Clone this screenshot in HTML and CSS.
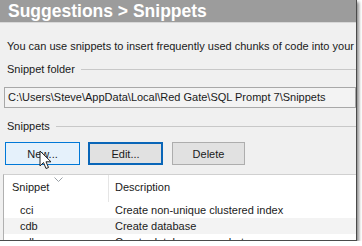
FILE: index.html
```html
<!DOCTYPE html>
<html>
<head>
<meta charset="utf-8">
<link rel="stylesheet" href="styles.css">
</head>
<body>
<div class="frame">
  <div class="title">Suggestions &gt; Snippets</div>
  <div class="content">
    <p class="intro">You can use snippets to insert frequently used chunks of code into your</p>
    <div class="group-label"><span>Snippet folder</span><i></i></div>
    <div class="path">C:\Users\Steve\AppData\Local\Red Gate\SQL Prompt 7\Snippets</div>
    <div class="group-label second"><span>Snippets</span><i></i></div>
    <div class="buttons">
      <button class="btn hover">New...</button>
      <button class="btn focus">Edit...</button>
      <button class="btn del">Delete</button>
    </div>
    <div class="list">
      <div class="list-head">
        <div class="col c1">Snippet<svg class="sort" width="9" height="5" viewBox="0 0 9 5"><path d="M0.5 0.5 L4.5 4.5 L8.5 0.5" fill="none" stroke="#9aa0a6" stroke-width="1"/></svg></div>
        <div class="col c2">Description</div>
      </div>
      <div class="row"><div class="col c1">cci</div><div class="col c2">Create non-unique clustered index</div></div>
      <div class="row alt"><div class="col c1">cdb</div><div class="col c2">Create database</div></div>
      <div class="row"><div class="col c1">cdbs</div><div class="col c2">Create database snapshot</div></div>
    </div>
  </div>
  <svg class="cursor" width="14" height="21" viewBox="0 0 14 21"><path d="M1 1 L1 16 L4.5 12.5 L7 18.5 L9.5 17.5 L7 11.8 L12 11.8 Z" fill="#fff" stroke="#222" stroke-width="1" stroke-linejoin="round"/></svg>
</div>
</body>
</html>
```
FILE: styles.css
```css
html, body { margin: 0; padding: 0; background: #fff; }
body { font-family: "Liberation Sans", Arial, sans-serif; font-size: 11px; color: #1a1a1a; }
.frame {
  position: relative;
  width: 356px; height: 240px;
  background: #f0f0f0;
  border-right: 1px solid #4a4a4a;
  border-bottom: 1px solid #4a4a4a;
  box-shadow: 2px 2px 3px rgba(0,0,0,0.45);
  overflow: hidden;
}
.title {
  height: 22px; line-height: 22px;
  background: #9c9c9c; color: #fff;
  font-weight: bold; font-size: 17.5px;
  padding-left: 8px;
  border-bottom: 1px solid #d8d8d8;
}
.content { padding: 0 0 0 4px; }
.intro { margin: 16px 0 0 3px; white-space: nowrap; line-height: 14px; }
.group-label { display: flex; align-items: center; margin: 9px 0 0 3px; height: 14px; }
.group-label span { white-space: nowrap; }
.group-label i { flex: 1; height: 1px; background: #c8c8c8; margin-left: 6px; }
.group-label.second { margin-top: 11px; }
.path {
  margin: 11px 0 0 0;
  height: 19px; line-height: 19px;
  border: 1px solid #a8a8a8;
  background: #f3f3f3;
  padding-left: 3px;
  white-space: nowrap;
}
.buttons { display: flex; gap: 8px; margin: 9px 0 0 1px; }
.btn {
  width: 75px; height: 23px;
  font: inherit; font-size: 11px; color: #1a1a1a;
  background: #e1e1e1; border: 1px solid #adadad;
  padding: 0; margin: 0;
}
.btn.hover { background: #e5f1fb; border-color: #0078d7; }
.btn.focus { border: 2px solid #0a66b8; }
.btn.del { margin-left: 1px; width: 73px; }
.list {
  margin-top: 9px; margin-left: -1px;
  background: #fff;
  border-left: 1px solid #b0b0b0;
  border-top: 1px solid #d0d0d0;
  height: 80px;
}
.list-head { display: flex; height: 27px; line-height: 24px; }
.list-head .c1 { border-right: 1px solid #e5e5e5; position: relative; }
.sort { position: absolute; left: 50px; top: 2px; }
.col { white-space: nowrap; }
.c1 { width: 96px; padding-left: 8px; }
.c2 { padding-left: 6px; }
.row { display: flex; height: 16px; line-height: 16px; }
.row .c1 { padding-left: 16px; width: 88px; }
.row .c2 { padding-left: 7px; }
.row.alt { background: #f3f3f3; }
.cursor { position: absolute; left: 39px; top: 150px; }
```
